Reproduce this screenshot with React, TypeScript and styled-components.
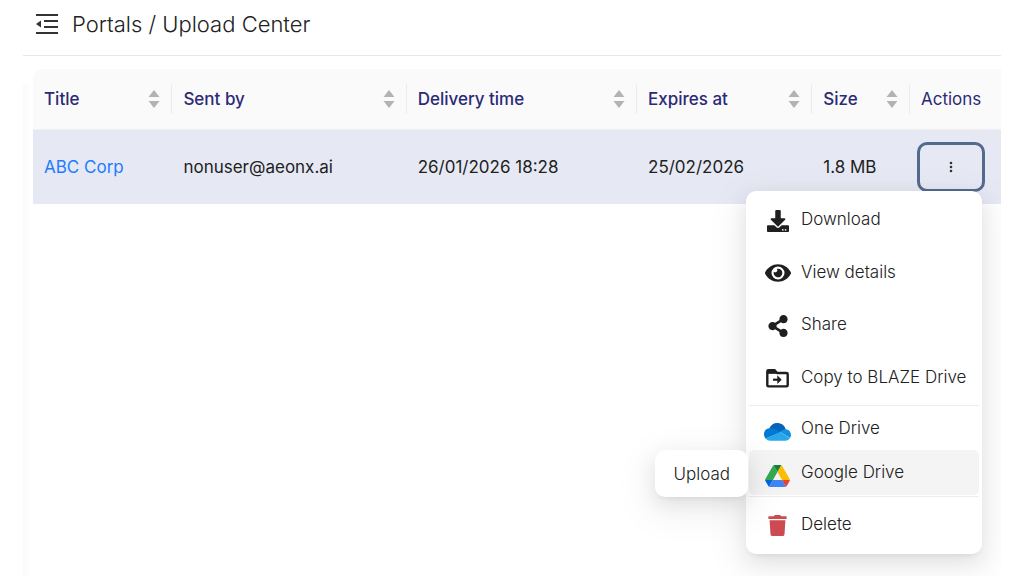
import React from "react";
import styled, { createGlobalStyle } from "styled-components";
import { FaDownload, FaEye, FaShareAlt, FaTrash } from "react-icons/fa";

const GlobalStyle = createGlobalStyle`
  * { box-sizing: border-box; }
  body {
    margin: 0;
    background: #fff;
    color: #212121;
    font-family: Inter, "Liberation Sans", sans-serif;
  }
  button { font: inherit; color: inherit; cursor: pointer; }
`;

const Page = styled.div`
  display: flex;
  flex-direction: column;
  min-height: 100vh;
  padding: 0 23px;
`;

const TopBar = styled.header`
  display: flex;
  align-items: center;
  gap: 14px;
  height: 56px;
  padding: 0 0 8px 13px;
  border-bottom: 1px solid #e8e8ea;
`;

const CollapseButton = styled.button`
  display: flex;
  padding: 0;
  border: 0;
  background: none;
`;

const PageTitle = styled.h1`
  margin: 0;
  font-size: 22px;
  font-weight: 300;
  line-height: 30px;
`;

const Main = styled.main`
  flex: 1;
  overflow: hidden;
  padding: 13px 0 0 10px;
  background: linear-gradient(to right, #fafafa, #fff) 0 28px / 9px 100% no-repeat;
`;

const Table = styled.table`
  width: 100%;
  table-layout: fixed;
  border-collapse: separate;
  border-spacing: 0;
  font-size: 17px;
  line-height: 24px;
`;

const HeadCell = styled.th<{ $width: string }>`
  width: ${(p) => p.$width};
  height: 61px;
  padding: 0;
  background: #fafafa;
  border-bottom: 1px solid #f0f0f2;
  color: #2b2a77;
  font-weight: 500;
  text-align: left;
  &:first-child { border-top-left-radius: 10px; }
  &:last-child { font-weight: 400; }
`;

const HeadInner = styled.div<{ $divided: boolean }>`
  display: flex;
  align-items: center;
  justify-content: space-between;
  height: 30px;
  padding: 0 11px;
  border-right: 1px solid ${(p) => (p.$divided ? "#ececec" : "transparent")};
  white-space: nowrap;
`;

const SortButton = styled.button`
  display: flex;
  padding: 0;
  border: 0;
  background: none;
`;

const Cell = styled.td`
  height: 74px;
  padding: 0 11px;
  background: #e6e9f3;
  white-space: nowrap;
`;

const ActionCell = styled(Cell)`
  padding: 0 0 0 7px;
`;

const TitleLink = styled.a`
  color: #1f7bff;
  text-decoration: none;
`;

const MenuAnchor = styled.div`
  position: relative;
  width: 68px;
`;

const MoreButton = styled.button`
  display: flex;
  align-items: center;
  justify-content: center;
  width: 100%;
  height: 50px;
  padding: 0;
  background: none;
  border: 3px solid #536a8f;
  border-radius: 10px;
`;

const Menu = styled.ul`
  position: absolute;
  top: 49px;
  right: 3px;
  width: 236px;
  margin: 0;
  padding: 2px 3px;
  list-style: none;
  background: #fff;
  border-radius: 10px;
  box-shadow: 0 7px 19px rgba(0, 0, 0, 0.08), 0 4px 7px -5px rgba(0, 0, 0, 0.12), 0 11px 34px 10px rgba(0, 0, 0, 0.05);
`;

const MenuItem = styled.li`
  position: relative;
`;

const MenuButton = styled.button<{ $height: number; $active?: boolean }>`
  display: flex;
  align-items: center;
  gap: 9px;
  width: 100%;
  height: ${(p) => p.$height}px;
  padding: 0 14px 1px 15px;
  border: 0;
  border-radius: 5px;
  background: ${(p) => (p.$active ? "#f4f4f4" : "none")};
  font-weight: 300;
  white-space: nowrap;
`;

const IconSlot = styled.span<{ $color?: string; $low?: boolean }>`
  display: flex;
  flex: none;
  align-items: center;
  justify-content: center;
  width: 28px;
  padding-top: ${(p) => (p.$low ? 8 : 3)}px;
  color: ${(p) => p.$color ?? "#1f1f1f"};
`;

const Divider = styled.li`
  height: 1px;
  margin-top: 1px;
  background: #ededed;
`;

const SubMenu = styled.ul`
  position: absolute;
  top: 0;
  right: calc(100% + 1px);
  margin: 0;
  padding: 0;
  list-style: none;
  background: #fff;
  border-radius: 10px;
  box-shadow: 0 7px 19px rgba(0, 0, 0, 0.08), 0 4px 7px -5px rgba(0, 0, 0, 0.12), 0 11px 34px 10px rgba(0, 0, 0, 0.05);
`;

const SubMenuButton = styled.button`
  height: 47px;
  padding: 0 18px;
  border: 0;
  background: none;
  font-weight: 300;
`;

const CollapseIcon = () => (
  <svg width="22" height="20" viewBox="0 0 22 20" fill="#333" aria-hidden="true">
    <path d="M0 0h22v2H0zM8 6h14v2H8zM8 12h14v2H8zM0 18h22v2H0zM5 6.500v7L0 10z" />
  </svg>
);

const SortIcon = () => (
  <svg width="12" height="18" viewBox="0 0 12 18" fill="#b3b3b3" aria-hidden="true">
    <path d="M6 0l5.500 7H.5zM6 18L.5 11h11z" />
  </svg>
);

const DotsIcon = () => (
  <svg width="4" height="12" viewBox="0 0 4 12" fill="#333" aria-hidden="true">
    <circle cx="2" cy="2" r="1.3" />
    <circle cx="2" cy="6" r="1.3" />
    <circle cx="2" cy="10" r="1.3" />
  </svg>
);

const FolderMoveIcon = () => (
  <svg width="23" height="19" viewBox="0 0 23 19" fill="none" stroke="currentColor" aria-hidden="true">
    <path d="M1.300 4V2.500c0-.7.500-1.200 1.200-1.200h6.200L11 4h9.500c.7 0 1.200.5 1.200 1.200v11c0 .7-.5 1.200-1.200 1.200h-18c-.7 0-1.200-.5-1.200-1.200z" strokeWidth="2.400" strokeLinejoin="round" />
    <path d="M1.500 2h7l2 2.300h-9z" fill="currentColor" strokeWidth="1" />
    <path d="M7 10.700h6" strokeWidth="2.200" />
    <path d="M11.300 6.300l4.400 4.400-4.400 4.400z" fill="currentColor" stroke="none" />
  </svg>
);

const OneDriveIcon = () => (
  <svg width="27" height="18" viewBox="0 0 27 18" aria-hidden="true">
    <path d="M5 6C7 1.500 10-.2 14 .1c4 .3 7 2.900 7.800 6.400L14 10z" fill="#0364b8" />
    <path d="M5.500 5.200C2.300 5.300 0 8 0 11.300 0 13 .6 14.400 1.600 15.600L17 9.300l-6-3.600c-1.700-.7-3.600-.9-5.500-.5z" fill="#0078d4" />
    <path d="M21.800 6.200c-2.300-.3-4 .7-5.600 2.700l9.700 6.200c.7-.9 1.100-1.900 1.100-3.200 0-3-2.200-5.500-5.200-5.700z" fill="#1490df" />
    <path d="M1.600 15.500C2.800 17 4.400 17.700 6.200 17.700h15.200c1.900 0 3.500-.9 4.500-2.500L16.200 8.900z" fill="#28a8ea" />
  </svg>
);

const GoogleDriveIcon = () => (
  <svg width="25" height="22" viewBox="0 0 87.3 78" aria-hidden="true">
    <path d="m6.600 66.850 3.850 6.650c.8 1.400 1.950 2.500 3.300 3.300l13.750-23.800h-27.500c0 1.550.4 3.100 1.200 4.500z" fill="#0066da" />
    <path d="m43.650 25-13.750-23.800c-1.350.8-2.500 1.900-3.300 3.300l-25.400 44a9.060 9.060 0 0 0 -1.200 4.500h27.500z" fill="#34a853" />
    <path d="m73.550 76.800c1.350-.8 2.500-1.900 3.300-3.300l1.600-2.750 7.650-13.250c.8-1.400 1.200-2.950 1.200-4.500h-27.502l5.852 11.500z" fill="#ea4335" />
    <path d="m43.650 25 13.750-23.800c-1.350-.8-2.900-1.200-4.500-1.200h-18.500c-1.600 0-3.150.45-4.500 1.200z" fill="#188038" />
    <path d="m59.800 53h-32.300l-13.750 23.800c1.350.8 2.900 1.200 4.500 1.200h50.800c1.600 0 3.150-.45 4.500-1.200z" fill="#4285f4" />
    <path d="m73.400 26.500-12.700-22c-.8-1.400-1.950-2.500-3.300-3.300l-13.750 23.800 16.150 28h27.450c0-1.550-.4-3.100-1.200-4.500z" fill="#fbbc04" />
  </svg>
);

const columns = [
  { label: "Title", width: "14.4%", sortable: true },
  { label: "Sent by", width: "24.2%", sortable: true },
  { label: "Delivery time", width: "23.8%", sortable: true },
  { label: "Expires at", width: "18.1%", sortable: true },
  { label: "Size", width: "10.1%", sortable: true },
  { label: "Actions", width: "9.4%", sortable: false },
];

export default function App() {
  return (
    <Page>
      <GlobalStyle />
      <TopBar>
        <CollapseButton aria-label="Collapse menu">
          <CollapseIcon />
        </CollapseButton>
        <PageTitle>Portals / Upload Center</PageTitle>
      </TopBar>
      <Main>
        <Table>
          <thead>
            <tr>
              {columns.map((c) => (
                <HeadCell key={c.label} $width={c.width} scope="col">
                  <HeadInner $divided={c.sortable}>
                    {c.label}
                    {c.sortable && (
                      <SortButton aria-label={`Sort by ${c.label}`}>
                        <SortIcon />
                      </SortButton>
                    )}
                  </HeadInner>
                </HeadCell>
              ))}
            </tr>
          </thead>
          <tbody>
            <tr>
              <Cell><TitleLink href="#abc-corp">ABC Corp</TitleLink></Cell>
              <Cell>nonuser@aeonx.ai</Cell>
              <Cell>26/01/2026 18:28</Cell>
              <Cell>25/02/2026</Cell>
              <Cell>1.8 MB</Cell>
              <ActionCell>
                <MenuAnchor>
                  <MoreButton aria-label="More actions" aria-expanded="true">
                    <DotsIcon />
                  </MoreButton>
                  <Menu>
                    <MenuItem>
                      <MenuButton $height={53}>
                        <IconSlot><FaDownload size={22} /></IconSlot>Download
                      </MenuButton>
                    </MenuItem>
                    <MenuItem>
                      <MenuButton $height={52}>
                        <IconSlot><FaEye size={26} /></IconSlot>View details
                      </MenuButton>
                    </MenuItem>
                    <MenuItem>
                      <MenuButton $height={53}>
                        <IconSlot><FaShareAlt size={22} /></IconSlot>Share
                      </MenuButton>
                    </MenuItem>
                    <MenuItem>
                      <MenuButton $height={53}>
                        <IconSlot><FolderMoveIcon /></IconSlot>Copy to BLAZE Drive
                      </MenuButton>
                    </MenuItem>
                    <Divider role="separator" />
                    <MenuItem>
                      <MenuButton $height={44}>
                        <IconSlot $low><OneDriveIcon /></IconSlot>One Drive
                      </MenuButton>
                    </MenuItem>
                    <MenuItem>
                      <MenuButton $height={45} $active aria-expanded="true">
                        <IconSlot $low><GoogleDriveIcon /></IconSlot>Google Drive
                      </MenuButton>
                      <SubMenu>
                        <li><SubMenuButton>Upload</SubMenuButton></li>
                      </SubMenu>
                    </MenuItem>
                    <Divider role="separator" />
                    <MenuItem>
                      <MenuButton $height={55}>
                        <IconSlot $color="#cd4a50"><FaTrash size={21} /></IconSlot>Delete
                      </MenuButton>
                    </MenuItem>
                  </Menu>
                </MenuAnchor>
              </ActionCell>
            </tr>
          </tbody>
        </Table>
      </Main>
    </Page>
  );
}
